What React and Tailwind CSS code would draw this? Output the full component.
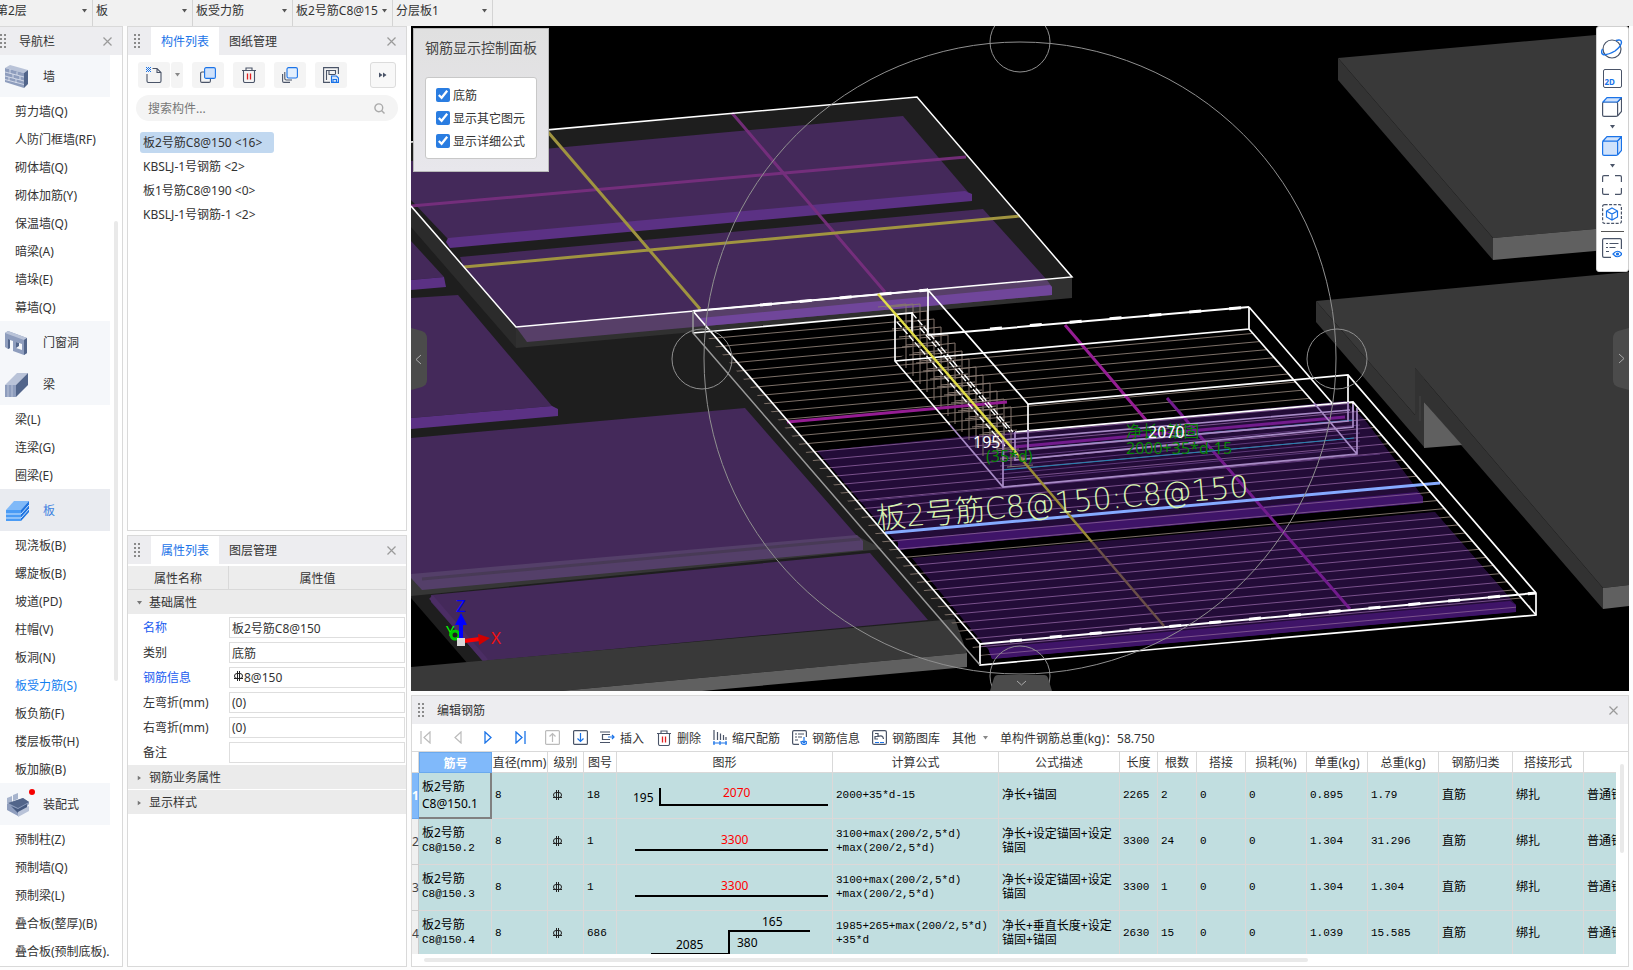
import { useState } from 'react'
import clsx from 'clsx'

const BLUE = '#1a73e8'
const INK = '#4a5468'

/* ─── Data ───────────────────────────────────────────────────────────────── */

const CONTEXT = ['第2层', '板', '板受力筋', '板2号筋C8@15', '分层板1']

const NAV = [
  { label: '墙', icon: 'wall', items: ['剪力墙(Q)', '人防门框墙(RF)', '砌体墙(Q)', '砌体加筋(Y)', '保温墙(Q)', '暗梁(A)', '墙垛(E)', '幕墙(Q)'] },
  { label: '门窗洞', icon: 'opening', items: [] },
  { label: '梁', icon: 'beam', items: ['梁(L)', '连梁(G)', '圈梁(E)'] },
  { label: '板', icon: 'slab', items: ['现浇板(B)', '螺旋板(B)', '坡道(PD)', '柱帽(V)', '板洞(N)', '板受力筋(S)', '板负筋(F)', '楼层板带(H)', '板加腋(B)'] },
  { label: '装配式', icon: 'precast', badge: true, items: ['预制柱(Z)', '预制墙(Q)', '预制梁(L)', '叠合板(整厚)(B)', '叠合板(预制底板).'] },
]

const COMPONENTS = ['板2号筋C8@150 <16>', 'KBSLJ-1号钢筋 <2>', '板1号筋C8@190 <0>', 'KBSLJ-1号钢筋-1 <2>']

const PROPS = [
  { id: 'name', label: '名称', value: '板2号筋C8@150', key: true },
  { id: 'kind', label: '类别', value: '底筋' },
  { id: 'rebar', label: '钢筋信息', value: '8@150', key: true, grade: true },
  { id: 'left', label: '左弯折(mm)', value: '(0)' },
  { id: 'right', label: '右弯折(mm)', value: '(0)' },
  { id: 'note', label: '备注', value: '' },
]

const HEADERS = ['直径(mm)', '级别', '图号', '图形', '计算公式', '公式描述', '长度', '根数', '搭接', '损耗(%)', '单重(kg)', '总重(kg)', '钢筋归类', '搭接形式', '']

const ROWS = [
  { no: '18', formula: ['2000+35*d-15'], desc: ['净长+锚固'], len: '2265', count: '2', unit: '0.895', total: '1.79' },
  { no: '1', formula: ['3100+max(200/2,5*d)', '+max(200/2,5*d)'], desc: ['净长+设定锚固+设定', '锚固'], len: '3300', count: '24', unit: '1.304', total: '31.296' },
  { no: '1', formula: ['3100+max(200/2,5*d)', '+max(200/2,5*d)'], desc: ['净长+设定锚固+设定', '锚固'], len: '3300', count: '1', unit: '1.304', total: '1.304' },
  { no: '686', formula: ['1985+265+max(200/2,5*d)', '+35*d'], desc: ['净长+垂直长度+设定', '锚固+锚固'], len: '2630', count: '15', unit: '1.039', total: '15.585' },
]

/* ─── Small icons ────────────────────────────────────────────────────────── */

function Caret({ className }) {
  return (
    <svg width="5" height="4" viewBox="0 0 5 4" className={className}>
      <path d="M0 0h5L2.5 3.5z" fill="currentColor" />
    </svg>
  )
}

function Grip() {
  return (
    <svg width="6" height="14" viewBox="0 0 6 14" className="shrink-0" fill="#8a8a8a">
      {[0, 4, 8, 12].map(y => <g key={y}><rect y={y} width="2" height="2" /><rect x="4" y={y} width="2" height="2" /></g>)}
    </svg>
  )
}

function CloseButton() {
  return (
    <button aria-label="关闭" className="ml-auto shrink-0 text-[#9a9a9a]">
      <svg width="9" height="9" viewBox="0 0 9 9" stroke="currentColor" strokeWidth="1.2"><path d="M.5.5l8 8M8.5.5l-8 8" /></svg>
    </button>
  )
}

function Grade() {
  return (
    <svg width="9" height="10" viewBox="0 0 9 10" fill="none" stroke="#222" strokeWidth="1" className="shrink-0">
      <path d="M3.500 0v10M5.500 0v10M0 7.500h9" />
      <rect x=".5" y="2.500" width="8" height="5" rx="2.500" />
    </svg>
  )
}

function NavIcon({ name }) {
  return (
    <svg width="24" height="26" viewBox="0 0 24 26" className="shrink-0">
      {name === 'wall' && (
        <>
          <path d="M0 4l5-3 18 5-4 3z" fill="#b9c3d8" />
          <path d="M19 9l4-3v14l-4 4z" fill="#52658a" />
          <path d="M0 4l19 5v15L0 18z" fill="#8e9dbd" />
          <path d="M0 8l19 5M0 12l19 5M0 15.500l19 5M5 5v4.500M12 7.500V11M8 10v4M15 12v4M4 13v4M11 15v4" stroke="#dfe5f0" strokeWidth=".8" fill="none" />
        </>
      )}
      {name === 'opening' && (
        <>
          <path d="M0 3l3-2 19 7v15l-3 2-11-4V11l-3-1v8l-2 1-3-2z" fill="#8e9dbd" />
          <path d="M0 3l3-2 19 7-3 2z" fill="#b9c3d8" />
          <path d="M19 10l3-2v15l-3 2zM3 9l2 1v8l-2 1z" fill="#52658a" />
          <path d="M11 12l6 2v6l-6-2z" fill="#f5f7fa" /><path d="M11 12l3 1v3l-3 2z" fill="#52658a" />
        </>
      )}
      {name === 'beam' && (
        <>
          <path d="M0 13L12 1h11L11 13z" fill="#b9c3d8" />
          <path d="M11 13L23 1v12L11 25z" fill="#52658a" />
          <path d="M0 13h11v12H0z" fill="#8e9dbd" /><path d="M3 13v12M7 13v12" stroke="#b9c3d8" />
        </>
      )}
      {name === 'slab' && (
        <>
          <path d="M1 12l8-9h15l-8 9z" fill="#80b9f8" />
          <path d="M1 12h15v11H1z" fill="#4a9bf5" /><path d="M16 12l8-9v11l-8 9z" fill="#1f74e0" />
          <path d="M1 16h15l8-9M1 20h15l8-9" stroke="#d2e6fd" fill="none" />
        </>
      )}
      {name === 'precast' && (
        <>
          <path d="M2 6l5-2v6l-5 2zM8 3l5-2v6l-5 2z" fill="#a7b4cd" />
          <path d="M2 12l16-6 6 4v2l-2 2 2 3-11 7-11-6z" fill="#8e9dbd" />
          <path d="M3 11l15-5 6 4-11 6z" fill="#52658a" /><path d="M6 14l7 3 9-5v4l-9 5z" fill="#465a80" />
          <path d="M13 20l11-6v5l-11 6z" fill="#b9c3d8" />
        </>
      )}
    </svg>
  )
}

function Trash() {
  return (
    <svg width="16" height="16" viewBox="0 0 16 16" fill="none" stroke={INK} strokeWidth="1.1">
      <path d="M1 3.500h14M5 3V1h6v2M2.500 3.500V14q0 1.500 1.500 1.500h8q1.500 0 1.500-1.500V3.500" />
      <path d="M6.500 6.500v6M9.500 6.500v6" stroke="#e02020" strokeWidth="1.300" />
    </svg>
  )
}

/* ─── Docks on the left ──────────────────────────────────────────────────── */

function NavPanel() {
  return (
    <nav className="flex w-[123px] shrink-0 flex-col overflow-hidden border-y border-r border-[#d9d9d9] bg-white">
      <div className="flex h-7 shrink-0 items-center bg-[#ededf0] pr-[10px]">
        <Grip />
        <h2 className="ml-[13px] pt-[2px]">导航栏</h2>
        <CloseButton />
      </div>
      <div className="flex min-h-0 flex-1">
        <div className="w-[110px] shrink-0">
          {NAV.map(group => (
            <div key={group.label}>
              <button
                className={clsx(
                  'flex h-[42px] w-full items-center pt-[2px] pl-[5px]',
                  group.icon === 'slab' ? 'bg-[#e9ebf0] text-[#3f83e0]' : 'bg-[#f5f7fa]'
                )}
              >
                <NavIcon name={group.icon} />
                <span className="relative ml-[14px]">
                  {group.label}
                  {group.badge && <i className="absolute -top-2 -left-3.5 size-1.5 rounded-full bg-[#f60000]" />}
                </span>
              </button>
              {group.items.map(item => (
                <button
                  key={item}
                  className={clsx('flex h-7 w-full items-center pt-[2px] pl-[15px] whitespace-nowrap', item === '板受力筋(S)' && 'text-[#1280f0]')}
                >
                  {item}
                </button>
              ))}
            </div>
          ))}
        </div>
        <div className="mt-[166px] ml-1 h-[460px] w-1 rounded-full bg-[#e9e9e9]" />
      </div>
    </nav>
  )
}

function TabHeader({ tabs }) {
  return (
    <div role="tablist" className="flex h-7 shrink-0 items-center bg-[#ededf0] pr-[10px] pl-1.5">
      <Grip />
      <button role="tab" aria-selected="true" className="ml-[11px] h-7 w-[68px] bg-white pt-[2px] text-[#1a73e8]">{tabs[0]}</button>
      <button role="tab" aria-selected="false" className="h-7 w-[68px] pt-[2px]">{tabs[1]}</button>
      <CloseButton />
    </div>
  )
}

function ComponentPanel() {
  const [active, setActive] = useState(0)
  const tool = 'flex h-[26px] w-8 items-center justify-center rounded-[3px] bg-[#f4f4f4]'
  return (
    <section className="flex min-h-0 flex-1 flex-col border border-[#d9d9d9] bg-white">
      <TabHeader tabs={['构件列表', '图纸管理']} />
      <div className="mt-[7px] flex gap-[9px] px-[10px]">
        <div className="flex">
          <button aria-label="新建" className={tool}>
            <svg width="16" height="16" viewBox="0 0 16 16" fill="none" stroke={INK} strokeWidth="1.1">
              <path d="M6.500 1.500H11L15 5.500V14q0 1.500-1.500 1.500H2.500Q1 15.500 1 14V7M11 1.500v4h4" />
              <path d="M0 .5h5M0 2.500h5M0 4.500h5" stroke={BLUE} strokeDasharray="1 1" />
              <path d="M1 1.500h4M1 3.500h4" stroke={BLUE} strokeDasharray="1 1" />
            </svg>
          </button>
          <button aria-label="新建选项" className="ml-px flex h-[26px] w-3 items-center justify-center rounded-[3px] bg-[#f4f4f4] text-[#888]"><Caret /></button>
        </div>
        <button aria-label="复制" className={tool}>
          <svg width="16" height="16" viewBox="0 0 16 16" fill="none" strokeWidth="1.1">
            <path d="M4 5H2Q.6 5 .6 6.500V14q0 1.400 1.400 1.400h7q1.400 0 1.400-1.400v-2" stroke={INK} />
            <rect x="4.600" y=".6" width="10.800" height="10.800" rx="1.500" fill="#cfe1fa" stroke={BLUE} />
          </svg>
        </button>
        <button aria-label="删除" className={tool}><Trash /></button>
        <button aria-label="层间复制" className={tool}>
          <svg width="16" height="16" viewBox="0 0 16 16" fill="none" strokeWidth="1.1">
            <path d="M.6 7v7q0 1.400 1.400 1.400h6M2.800 5v6.500q0 1.500 1.500 1.500H10" stroke={INK} />
            <rect x="5" y=".6" width="10.400" height="10.400" rx="1.500" fill="#e3effd" stroke={BLUE} />
          </svg>
        </button>
        <button aria-label="存档" className={tool}>
          <svg width="16" height="16" viewBox="0 0 16 16" fill="none" strokeWidth="1.1">
            <path d="M7 15.400H.6V.6h14.800V7M3.500 13V3.500h9V7M6 3.500v4h6.500" stroke={INK} />
            <path d="M8.500 9h5l2 2v4.400h-7z" fill="#d6e6fb" stroke={BLUE} /><path d="M10 15v-2.500h3.500V15" stroke={BLUE} />
          </svg>
        </button>
        <button aria-label="更多" className="ml-auto flex size-[26px] items-center justify-center rounded-[3px] border border-[#dcdcdc] bg-[#f8f8f8]">
          <svg width="8" height="6" viewBox="0 0 8 6" fill={INK}><path d="M0 .5L3.500 3 0 5.500zM4 .5L7.500 3 4 5.500z" /></svg>
        </button>
      </div>
      <label className="mx-2 mt-[7px] flex h-[26px] items-center rounded-full bg-[#f4f4f4] pr-[13px] pl-3">
        <input placeholder="搜索构件..." aria-label="搜索构件" className="min-w-0 flex-1 bg-transparent pt-[2px] outline-none placeholder:text-[#777]" />
        <svg width="11" height="11" viewBox="0 0 11 11" fill="none" stroke="#aaa" strokeWidth="1.400"><circle cx="4.800" cy="4.800" r="3.900" /><path d="M7.500 7.500L10.500 10.500" /></svg>
      </label>
      <ul className="mt-[11px] flex flex-col items-start gap-[3px] pl-3">
        {COMPONENTS.map((name, i) => (
          <li key={name} className="h-[21px]">
            <button
              onClick={() => setActive(i)}
              className={clsx('h-[21px] rounded-[3px] pr-3 pl-[3px] whitespace-pre', i === active && 'bg-[#c1d8f0]')}
            >
              {name}
            </button>
          </li>
        ))}
      </ul>
    </section>
  )
}

function GroupRow({ open, children }) {
  return (
    <button className="mb-px flex h-6 w-full shrink-0 items-center bg-[#ebebeb] pt-[2px] pl-[9px] text-left">
      <Caret className={clsx('mr-[7px] text-[#777]', !open && '-rotate-90')} />
      {children}
    </button>
  )
}

function PropertyPanel() {
  return (
    <section className="flex h-[432px] shrink-0 flex-col border border-[#d9d9d9] bg-white">
      <TabHeader tabs={['属性列表', '图层管理']} />
      <div className="mt-[2px] flex h-6 shrink-0 border-b border-[#d9d9d9] bg-[#ededed] text-center leading-[25px]">
        <span className="w-[101px] border-r border-[#d9d9d9]">属性名称</span>
        <span className="flex-1">属性值</span>
      </div>
      <GroupRow open>基础属性</GroupRow>
      {PROPS.map(p => (
        <div key={p.id} className="flex h-[25px] items-center pr-px pl-[15px]">
          <label htmlFor={p.id} className={clsx('w-[86px] shrink-0', p.key && 'text-[#1a5cf0]')}>{p.label}</label>
          <div className="flex h-[21px] flex-1 items-center border border-[#dedede] pl-[2px]">
            {p.grade && <span className="mr-px ml-[2px] pb-[3px]"><Grade /></span>}
            <input id={p.id} defaultValue={p.value} className="h-[19px] w-full min-w-0 bg-transparent outline-none" />
          </div>
        </div>
      ))}
      <GroupRow>钢筋业务属性</GroupRow>
      <GroupRow>显示样式</GroupRow>
    </section>
  )
}

/* ─── 3D view ────────────────────────────────────────────────────────────── */

const BARS = Array.from({ length: 40 }, (_, i) => 326 + i * 8.75)
const STIRRUPS = Array.from({ length: 16 }, (_, i) => ({ x: 906 + i * 7, y: 287 + i * 8 }))

function Bars({ stroke }) {
  return (
    <g stroke={stroke}>
      {BARS.map(y => <path key={y} d={`M650 ${y + 18}L1560 ${y - 64}`} />)}
    </g>
  )
}

function Scene() {
  return (
    <svg viewBox="411 26 1218 665" preserveAspectRatio="xMidYMid slice" className="absolute inset-0 h-full w-full">
      <defs>
        <clipPath id="bars"><path d="M698 326L912 313 912 350 895 361 1249 329 1314 403 1353 402 1536 615 1530 605 980 656z" /></clipPath>
        <clipPath id="tiles">
          <path d="M817 451L1000 433 1345 401 1365 420 1423 497V503L898 550 885 530z" />
          <path d="M912 558L1435 512 1516 605V612L992 659z" />
        </clipPath>
      </defs>
      <rect x="411" y="26" width="1218" height="665" />

      {/* grey slabs on the right */}
      <path d="M1338 58L1629 32V226L1493 238z" fill="#393939" />
      <path d="M1338 58V80L1493 260V238z" fill="#333" />
      <path d="M1493 238L1629 226V248L1493 260z" fill="#606060" />
      <path d="M1316 301L1629 272V585L1603 588 1415 368V415z" fill="#393939" />
      <path d="M1316 301L1415 415V368L1424 378V447L1316 322z" fill="#333" />
      <path d="M1415 368L1603 588V609L1461 445 1424 402 1415 415z" fill="#323232" />
      <path d="M1424 402L1462 445 1424 448z" fill="#606060" />
      <path d="M1420 396v25" stroke="#444" />
      <path d="M1603 588L1629 585V606L1603 609z" fill="#606060" />

      {/* lower left slab */}
      <path d="M411 200L520 300 693 312 955 616V640L468 664 411 598z" fill="#1e1e1e" />
      <path d="M411 241L444 277 411 280z" fill="#44295a" />
      <path d="M411 280L444 277 446 287 411 290z" fill="#5b3184" />
      <path d="M411 298L458 295 552 406 411 418z" fill="#44295a" />
      <path d="M411 418L552 406 558 409V416L411 429z" fill="#5b3184" />
      <path d="M411 438L745 408 857 536 411 576z" fill="#44295a" />
      <path d="M411 576L857 536 883 549 411 596z" fill="#363636" />
      <path d="M411 574L857 535 863 541V550L422 590 411 578z" fill="#543f69" />
      <path d="M422 579L860 539" stroke="#483a56" strokeWidth="3" />
      <path d="M431 595L870 553 928 620 483 661 431 602z" fill="#44295a" />
      <path d="M431 597L486 661" stroke="#4b2d64" strokeWidth="5" />
      <path d="M411 667L955 619 967 653 560 691H411z" fill="#393939" />
      <path d="M560 691L967 653V667L702 691z" fill="#606060" />

      {/* upper left slab */}
      <path d="M411 142L917 97 1072 277 516 327 411 206z" fill="#1e1e1e" />
      <path d="M411 206L516 327V348L411 227z" fill="#2b2b2b" />
      <path d="M516 327L1072 277V298L516 348z" fill="#303030" />
      <path d="M411 161L903 116 968 192 448 239 411 200z" fill="#44295a" />
      <path d="M448 238L965 191 972 194V201L450 248 446 242z" fill="#5b3184" />
      <path d="M460 257L983 209 1047 280 516 327 463 266z" fill="#44295a" />
      <path d="M516 327L1047 280 1052 287V295L527 342z" fill="#573f68" />
      <path d="M700 318L1050 285 1052 287V295L706 326z" fill="#70469a" />
      <g fill="none" strokeWidth="3">
        <path d="M411 206L966 157M732 113L885 292" stroke="#7a2f80" strokeOpacity=".9" />
        <path d="M548 132L700 309M464 267L1020 216" stroke="#a09440" />
      </g>
      <path d="M411 142L917 97 1072 277 516 327 411 206" stroke="#fff" strokeWidth="1.500" fill="none" />

      {/* selected slab */}
      <path d="M817 451L1000 433 1345 401 1365 420 1423 497 898 543 885 530z" fill="#230c38" />
      <path d="M898 540L1417 492 1423 497V503L898 550z" fill="#3f1468" />
      <path d="M912 558L1435 512 1516 605 988 649z" fill="#230c38" />
      <path d="M988 648L1510 601 1516 605V612L992 659z" fill="#3f1468" />
      <g clipPath="url(#bars)"><Bars stroke="#7d7068" /></g>
      <g clipPath="url(#tiles)">
        <path d="M817 451L1000 433 1345 401 1365 420 1423 497 898 543 885 530zM912 558L1435 512 1516 605 988 649z" fill="#230c38" />
        <path d="M898 540L1417 492 1423 497V503L898 550zM988 648L1510 601 1516 605V612L992 659z" fill="#3f1468" />
        <Bars stroke="#7a528c" />
        <path d="M1000 458L1360 425M1000 466L1360 433M1000 474L1360 441M1000 481L1360 448M840 503L1380 454" stroke="#5c3878" />
      </g>
      <g fill="none" stroke="#85766e">
        {STIRRUPS.map((s, i) => (
          <path key={s.x} d={`M${s.x - 28} ${Math.max(s.y, 304) + 3}L${s.x} ${Math.max(s.y, 304)}V${s.y + (i > 11 ? 60 : 81)}M${s.x - 14} ${s.y + 42}l34 -3M${s.x - 4} ${s.y + 60}l26 -2`} />
        ))}
      </g>
      <g fill="none" strokeWidth="3">
        <path d="M787 422L1007 402M1065 325L1146 420" stroke="#951d93" />
        <path d="M1014 447L1345 417M1167 398L1350 609" stroke="#721b8c" />
        <path d="M885 533L1440 483" stroke="#85aaff" />
      </g>
      <path d="M1028 449L1353 420M1003 470L1354 438" stroke="#2585b0" fill="none" />
      <g fill="none" stroke="#fff" strokeWidth="1.700">
        <path d="M693 311L980 644V665L1536 615V593L1348 375 1028 404 928 290V335" />
        <path d="M693 333L912 313V334M895 315V361L950 425M895 361L1249 329V307" />
        <path d="M1249 329L1314 403M1249 307L1332 403M1015 432L1353 402 1536 615M1348 375V402M1028 404V430M1353 402V412" />
        <path d="M693 311L928 290M928 335L1249 307M980 644L1536 593" strokeWidth="2" />
        <path d="M760 305L928 290M990 329L1249 307M1010 641L1536 593" strokeWidth="3" strokeDasharray="12 28" />
        <path d="M897 322L1005 446M912 313L1013 432M920 328L1010 432" strokeDasharray="7 2" strokeWidth="1.400" />
      </g>
      <g fill="none" stroke="#a88bc6" strokeWidth="1.700">
        <path d="M950 425L1003 487 1357 454V408M1003 487V440L1350 410M1015 432V460L1353 427V404M1314 403L1357 454M1028 430V449L1348 421V402" />
      </g>
      <path d="M693 311V333L980 665" fill="none" stroke="#999" strokeWidth="1.500" />
      <path d="M878 294L1018 455" stroke="#e2de48" strokeWidth="2.500" />
      <path d="M1018 455L1092 542" stroke="#9a8b35" strokeWidth="2.500" />
      <path d="M1092 542L1164 626" stroke="#6b5048" strokeWidth="2.500" />

      {/* orbit rings */}
      <g fill="none" stroke="#909090">
        <circle cx="1020" cy="358" r="316" />
        <circle cx="1020" cy="42" r="30" /><circle cx="702" cy="359" r="30" />
        <circle cx="1337" cy="359" r="30" /><circle cx="1020" cy="676" r="30" />
      </g>

      <g className="font-['Noto_Sans','Noto_Sans_CJK_SC',sans-serif] text-[16px]">
        <g fill="#078307">
          <text x="986" y="462">(35*d)</text>
          <text x="1126" y="437">净长+锚固</text>
          <text x="1126" y="454">2000+35*d-15</text>
        </g>
        <g fill="#fff">
          <text x="973" y="448">195</text>
          <text x="1148" y="438">2070</text>
        </g>
      </g>
      <text x="877" y="529" transform="rotate(-5 877 529)" fill="#d9f5b0" className="font-['DejaVu_Sans','Noto_Sans_CJK_SC',sans-serif] text-[30px] font-light">
        板2号筋C8@150:C8@150
      </text>

      {/* axis gizmo */}
      <g className="font-['Noto_Sans',sans-serif] text-[17px]">
        <text x="456" y="612" fill="#00f">Z</text>
        <text x="491" y="644" fill="#f01010">X</text>
        <text x="446" y="636" fill="#0f0" className="text-[15px]">Y</text>
      </g>
      <circle cx="455" cy="635" r="4" fill="none" stroke="#0c0" strokeWidth="3" />
      <path d="M461 640V622" stroke="#00f" strokeWidth="4" /><path d="M455 625L461 613 467 625z" fill="#00f" />
      <path d="M464 641L480 639" stroke="#f00" strokeWidth="4" /><path d="M478 634L490 638 479 645z" fill="#d00000" />
      <path d="M457 638h8v8h-8z" fill="#d8d8d8" />

      {/* dock handles */}
      <g fill="#4b4b4b">
        <path d="M411 328L422 331Q427 333 427 338V380Q427 385 422 387L411 390z" />
        <path d="M1629 328L1618 331Q1613 333 1613 338V380Q1613 385 1618 387L1629 390z" />
        <path d="M990 691L994 678Q995 675 998 675H1044Q1047 675 1048 678L1052 691z" />
      </g>
      <path d="M421 355L416 359.500 421 364M1619 354L1624 358.500 1619 363M1017 681L1021.500 685 1026 681" fill="none" stroke="#aaa" />
    </svg>
  )
}

function DisplayPanel() {
  return (
    <fieldset className="absolute top-[2px] left-[2px] h-36 w-[134px] border border-[#b8b8b8] bg-linear-to-b from-[#e0e0e0] to-[#e8e7ec] px-[11px]">
      <p className="mt-[9px] text-[14px] leading-5 whitespace-nowrap text-[#444]">钢筋显示控制面板</p>
      <div className="mt-[19px] flex h-[82px] flex-col gap-[9px] rounded-[3px] border border-[#c8c8c8] bg-white pt-[10px] pl-[10px]">
        {['底筋', '显示其它图元', '显示详细公式'].map(label => (
          <label key={label} className="flex h-3.5 items-center gap-[3px] whitespace-nowrap">
            <input type="checkbox" defaultChecked className="size-3.5 accent-[#2a7de1]" />
            <span className="pt-[2px]">{label}</span>
          </label>
        ))}
      </div>
    </fieldset>
  )
}

function Cube({ fill }) {
  return (
    <svg width="20" height="20" viewBox="0 0 20 20" fill={fill ? '#d0e2fb' : 'none'} stroke={fill ? BLUE : INK} strokeWidth="1.200">
      <path d="M15.500 5l4-4V14.500l-4 4.500" />
      <rect x=".6" y="5" width="15" height="14.400" rx="1.500" />
      <path d="M1 5l4-4.400h14.400L15.500 5z" fill="#d0e2fb" stroke={BLUE} />
    </svg>
  )
}

function ViewTools() {
  return (
    <div className="absolute top-0 right-0 flex h-[246px] w-[33px] flex-col items-center rounded-[3px] border border-[#d0d0d0] bg-white pt-3 pr-px">
      <button aria-label="动态观察">
        <svg width="22" height="20" viewBox="0 0 22 20" fill="none" strokeWidth="1.200">
          <circle cx="11" cy="10" r="9" stroke={INK} />
          <path d="M15 1.500Q20 0 20.500 3 20.500 7 14 12 6 16.500 2 15.500-.5 14 1.500 10" stroke={BLUE} strokeWidth="1.400" />
        </svg>
      </button>
      <button aria-label="2D" className="mt-[10px] flex h-[19px] w-[19px] items-end rounded-[2px] border border-[#4a5468] pl-px text-[8px] leading-[10px] font-bold text-[#1a73e8]">2D</button>
      <button aria-label="视图" className="mt-[9px]"><Cube /></button>
      <button aria-label="视图选项" className="mt-2 text-[#4a5468]"><Caret /></button>
      <button aria-label="显示" className="mt-[7px]"><Cube fill /></button>
      <button aria-label="显示选项" className="mt-2 text-[#4a5468]"><Caret /></button>
      <button aria-label="全屏" className="mt-[7px]">
        <svg width="20" height="20" viewBox="0 0 20 20" fill="none" stroke={INK} strokeWidth="1.200">
          <path d="M.6 7V2Q.6.6 2 .6h5M13 .6h5Q19.400.6 19.400 2v5M19.400 13v5q0 1.400-1.400 1.400h-5M7 19.400H2Q.6 19.400.6 18v-5" />
        </svg>
      </button>
      <button aria-label="局部三维" className="mt-[9px]">
        <svg width="20" height="20" viewBox="0 0 20 20" fill="none" strokeWidth="1.200">
          <rect x=".6" y=".6" width="18.800" height="18.800" rx="2" stroke={INK} strokeDasharray="3 1.500" />
          <path d="M10 4l5.500 3v6L10 16l-5.500-3V7zM4.500 7L10 10l5.500-3M10 10v6" stroke={BLUE} />
        </svg>
      </button>
      <i className="mt-[7px] h-px w-[23px] shrink-0 bg-[#555]" />
      <button aria-label="显示设置" className="mt-[6px]">
        <svg width="20" height="20" viewBox="0 0 20 20" fill="none" strokeWidth="1.200">
          <path d="M9 19.400H2Q.6 19.400.6 18V2Q.6.6 2 .6h16Q19.400.6 19.400 2v9" stroke={INK} />
          <path d="M4 5.500h2M7.500 5.500h9M4 9.500h2M7.500 9.500h6M4 13.500h3" stroke={INK} />
          <path d="M11 16q4.500-5.500 9 0-4.500 5.500-9 0z" stroke={BLUE} /><circle cx="15.500" cy="16" r="1" fill={BLUE} stroke={BLUE} />
        </svg>
      </button>
    </div>
  )
}

/* ─── Rebar editor ───────────────────────────────────────────────────────── */

function Shape({ row }) {
  return (
    <svg width="215" height="45" viewBox="0 0 215 45" className="block font-['Noto_Sans',sans-serif] text-[12px]">
      {row === 0 && (
        <>
          <path d="M43 15v17h168" fill="none" stroke="#000" strokeWidth="2" />
          <text x="16" y="29">195</text><text x="106" y="24" fill="#f00">2070</text>
        </>
      )}
      {(row === 1 || row === 2) && (
        <>
          <path d="M18 31h193" stroke="#000" strokeWidth="2" />
          <text x="104" y="25" fill="#f00">3300</text>
        </>
      )}
      {row === 3 && (
        <>
          <path d="M34 43h78V20h81" fill="none" stroke="#000" strokeWidth="2" />
          <text x="145" y="15">165</text><text x="59" y="38">2085</text><text x="120" y="36">380</text>
        </>
      )}
    </svg>
  )
}

function Tool({ label, children }) {
  return <button className="flex items-center gap-[5px] whitespace-nowrap">{children}<span className="pt-[2px]">{label}</span></button>
}

function EditorToolbar() {
  return (
    <div className="flex h-[27px] shrink-0 items-center overflow-hidden pl-2 whitespace-nowrap">
      <div className="flex w-[125px] shrink-0 items-center justify-between pr-[19px]">
        <button aria-label="首行"><svg width="11" height="13" viewBox="0 0 11 13" fill="none" stroke="#bbb" strokeWidth="1.200"><path d="M1 0v13M10 1L4 6.500l6 5.500z" /></svg></button>
        <button aria-label="上一行"><svg width="8" height="13" viewBox="0 0 8 13" fill="none" stroke="#bbb" strokeWidth="1.200"><path d="M7 1L1 6.500l6 5.500z" /></svg></button>
        <button aria-label="下一行"><svg width="8" height="13" viewBox="0 0 8 13" fill="none" stroke={BLUE} strokeWidth="1.300"><path d="M1 1l6 5.500L1 12z" /></svg></button>
        <button aria-label="末行"><svg width="11" height="13" viewBox="0 0 11 13" fill="none" stroke={BLUE} strokeWidth="1.300"><path d="M10 0v13M1 1l6 5.500L1 12z" /></svg></button>
      </div>
      <div className="flex gap-[13px] pr-3">
        <button aria-label="上移"><svg width="15" height="15" viewBox="0 0 15 15" fill="none" stroke="#bbb" strokeWidth="1.200"><rect x=".6" y=".6" width="13.800" height="13.800" rx="1" /><path d="M7.500 12V4M4.500 6.500l3-3 3 3" /></svg></button>
        <button aria-label="下移"><svg width="15" height="15" viewBox="0 0 15 15" fill="none" stroke={INK} strokeWidth="1.200"><rect x=".6" y=".6" width="13.800" height="13.800" rx="1" /><path d="M7.500 3v8M4.500 8.500l3 3 3-3" stroke={BLUE} /></svg></button>
      </div>
      <div className="flex items-center gap-3">
        <Tool label="插入">
          <svg width="15" height="15" viewBox="0 0 15 15" fill="none" stroke={INK} strokeWidth="1.200"><path d="M0 2h10M0 12.500h10M10 4.500H2.500v5H10" /><path d="M8 7h6M12 5l2 2-2 2" stroke={BLUE} /></svg>
        </Tool>
        <Tool label="删除"><Trash /></Tool>
        <Tool label="缩尺配筋">
          <svg width="14" height="15" viewBox="0 0 14 15" fill="none" stroke={INK} strokeWidth="1.200"><path d="M1 0v10M4.500 2v8M7.500 3.500v6.500M10.500 5v5M13 7v3" /><path d="M0 13h14M1 11v4M7 11v4M13 11v4" stroke={BLUE} /></svg>
        </Tool>
        <Tool label="钢筋信息">
          <svg width="15" height="15" viewBox="0 0 15 15" fill="none" stroke={INK} strokeWidth="1.200"><path d="M7 14.400H2Q.6 14.400.6 13V2Q.6.6 2 .6h11Q14.400.6 14.400 2v5M3 4h2M6 4h6M3 7h2M6 7h4M3 10h3" /><path d="M12 7v6M10 11l2 2 2-2M9 11q0 3.500 3 3.500t3-3.500" stroke={BLUE} /></svg>
        </Tool>
        <Tool label="钢筋图库">
          <svg width="15" height="15" viewBox="0 0 15 15" fill="none" stroke={INK} strokeWidth="1.200"><rect x=".6" y=".6" width="13.800" height="13.800" rx="1.500" /><path d="M3 3.500h3v3H3v2.500h3M6 6.500q5-2 5.500 2.500" /><path d="M3 12.500h4M8 12.500h4" stroke={BLUE} /></svg>
        </Tool>
        <button className="flex items-center gap-[7px]"><span className="pt-[2px]">其他</span><Caret className="text-[#888]" /></button>
        <span className="pt-[2px]">单构件钢筋总重(kg)：58.750</span>
      </div>
    </div>
  )
}

function RebarTable() {
  const th = 'border-r border-b border-[#d9d9d9] bg-white p-0 text-center font-normal'
  const td = 'h-[46px] border-r border-b border-[#dcd8d8] bg-[#c1dee0] p-0 pb-[2px] pl-[3px]'
  const num = "font-['Liberation_Mono','Noto_Sans_CJK_SC',monospace] text-[11px]"
  return (
    <table className="w-[1242px] table-fixed border-separate border-spacing-0 text-black">
      <colgroup>
        <col className="w-[7px]" /><col className="w-[73px]" /><col className="w-[56px]" /><col className="w-[36px]" />
        <col className="w-[33px]" /><col className="w-[216px]" /><col className="w-[166px]" /><col className="w-[121px]" />
        <col className="w-[38px]" /><col className="w-[39px]" /><col className="w-[49px]" /><col className="w-[61px]" />
        <col className="w-[61px]" /><col className="w-[71px]" /><col className="w-[74px]" /><col className="w-[71px]" />
        <col className="w-[70px]" />
      </colgroup>
      <thead>
        <tr className="h-[21px] text-[#333]">
          <th className={th} />
          <th className="border border-[#6aa9ee] bg-[#80b9fa] p-0 pt-[2px] text-center leading-4 text-white">筋号</th>
          {HEADERS.map((h, i) => <th key={i} className={clsx(th, 'pt-[2px] leading-4 whitespace-nowrap')}>{h}</th>)}
        </tr>
      </thead>
      <tbody>
        {ROWS.map((r, i) => (
          <tr key={i}>
            <th className={clsx('border-r border-b p-0 text-center', i === 0 ? 'border-[#6aa9ee] bg-[#80b9fa] text-white' : 'border-[#ccc] bg-[#f0f0f0] font-normal text-[#444]')}>
              {i + 1}
            </th>
            {i === 0 ? (
              <td className="h-[46px] border-r-2 border-b-2 border-[#808080] bg-[#c1dee0] p-0 pl-[3px] leading-[17px]">板2号筋<br />C8@150.1</td>
            ) : (
              <td className={clsx(td, 'leading-[14px]')}>板2号筋<br /><span className={num}>C8@150.{i + 1}</span></td>
            )}
            <td className={clsx(td, num)}>8</td>
            <td className={td}><span className="flex pl-[2px]"><Grade /></span></td>
            <td className={clsx(td, num)}>{r.no}</td>
            <td className="border-r border-b border-[#dcd8d8] bg-[#c1dee0] p-0"><Shape row={i} /></td>
            <td className={clsx(td, num, 'leading-[14px] whitespace-nowrap')}>{r.formula.map(t => <div key={t}>{t}</div>)}</td>
            <td className={clsx(td, 'leading-[14px] whitespace-nowrap')}>{r.desc.map(t => <div key={t}>{t}</div>)}</td>
            <td className={clsx(td, num)}>{r.len}</td>
            <td className={clsx(td, num)}>{r.count}</td>
            <td className={clsx(td, num)}>0</td>
            <td className={clsx(td, num)}>0</td>
            <td className={clsx(td, num)}>{r.unit}</td>
            <td className={clsx(td, num)}>{r.total}</td>
            <td className={td}>直筋</td>
            <td className={td}>绑扎</td>
            <td className={clsx(td, 'whitespace-nowrap')}>普通钢筋</td>
          </tr>
        ))}
      </tbody>
    </table>
  )
}

function EditorPanel() {
  return (
    <section className="flex h-[272px] shrink-0 flex-col border border-[#d9d9d9] bg-white">
      <div className="flex h-7 shrink-0 items-center bg-[#ededf0] pr-[10px] pl-1.5">
        <Grip />
        <h2 className="ml-[13px] pt-[2px]">编辑钢筋</h2>
        <CloseButton />
      </div>
      <EditorToolbar />
      <div className="flex min-h-0 flex-1 border-t border-[#d9d9d9]">
        <div className="flex min-w-0 flex-1 flex-col">
          <div className="h-[202px] overflow-hidden"><RebarTable /></div>
          <div className="mt-1 ml-3 h-1 w-[884px] max-w-full rounded-full bg-[#e9e9e9]" />
        </div>
        <div className="mt-3 mr-1 ml-1 h-[89px] w-1 rounded-full bg-[#e9e9e9]" />
      </div>
    </section>
  )
}

/* ─── App ────────────────────────────────────────────────────────────────── */

export default function App() {
  return (
    <div className="flex h-screen flex-col overflow-hidden bg-[#fdfdfd] font-['Noto_Sans','Noto_Sans_CJK_SC',sans-serif] text-[12px] leading-4 text-[#333]">
      <header className="flex h-[26px] shrink-0 overflow-hidden bg-[#f1f1f1]">
        <div className="-ml-[7px] flex">
          {CONTEXT.map(c => (
            <div key={c} className="relative w-[100px] border-r border-[#d4d4d4]">
              <select aria-label={c} className="h-[22px] w-full appearance-none bg-transparent pl-[3px] outline-none"><option>{c}</option></select>
              <Caret className="pointer-events-none absolute top-[9px] right-[5px] text-[#555]" />
            </div>
          ))}
        </div>
      </header>
      <div className="flex min-h-0 flex-1 gap-1 pr-1 pb-[3px]">
        <NavPanel />
        <div className="flex w-[280px] shrink-0 flex-col gap-1">
          <ComponentPanel />
          <PropertyPanel />
        </div>
        <main className="flex min-w-0 flex-1 flex-col gap-1">
          <div className="relative min-h-0 flex-1 overflow-hidden bg-black">
            <Scene />
            <DisplayPanel />
            <ViewTools />
          </div>
          <EditorPanel />
        </main>
      </div>
    </div>
  )
}
